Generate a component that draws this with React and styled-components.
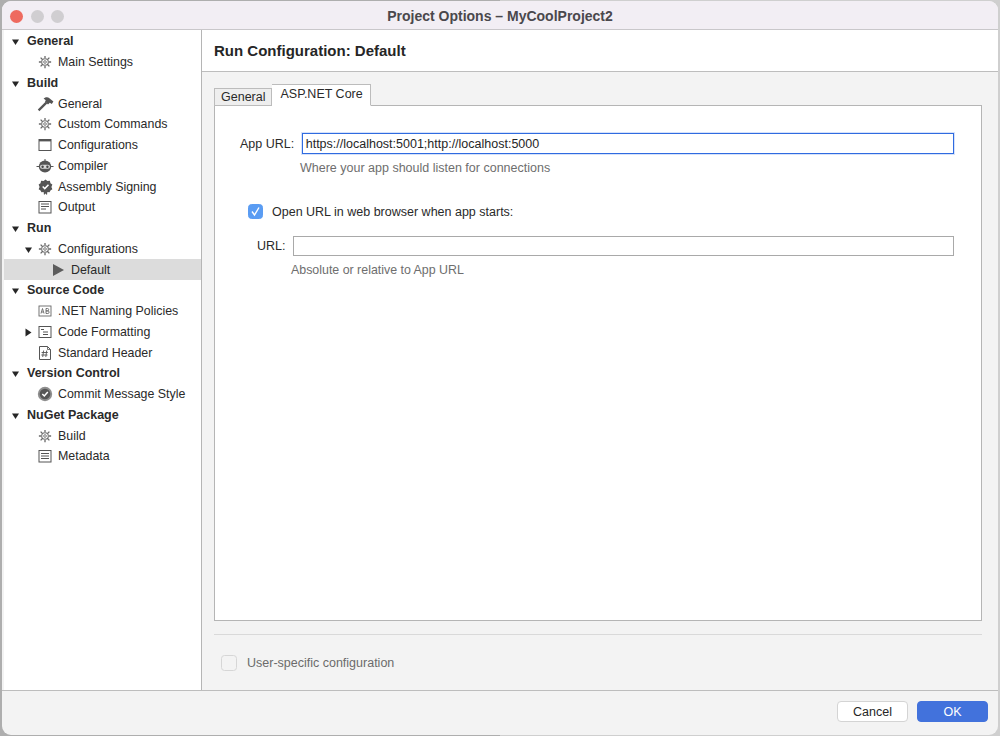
import React from "react";
import styled, { createGlobalStyle } from "styled-components";

const Global = createGlobalStyle`
  html, body { margin: 0; padding: 0; background: #b9b9b9; }
  body { font-family: "Liberation Sans", Arial, sans-serif; color: #262626; -webkit-font-smoothing: antialiased; }
  #root { width: 1000px; height: 736px; overflow: hidden; }
`;

const Desktop = styled.div`
  width: 1000px;
  height: 736px;
  padding: 1px 2px 1px 2px;
  box-sizing: border-box;
  background: linear-gradient(to right, #aeaeae 0 50%, #cfcfcf 50% 100%);
`;
const Win = styled.div`
  height: 100%;
  display: flex;
  flex-direction: column;
  border-radius: 9px;
  overflow: hidden;
  background: #f3f3f3;
`;
const TitleBar = styled.div`
  position: relative;
  height: 29px;
  flex: none;
  box-sizing: border-box;
  padding-top: 2px;
  display: flex;
  align-items: center;
  justify-content: center;
  background: #f2eef4;
  border-bottom: 1px solid #c9c7ca;
`;
const Lights = styled.div`
  position: absolute;
  left: 8px;
  top: 9px;
  display: flex;
  gap: 7.5px;
`;
const Light = styled.span`
  width: 13px;
  height: 13px;
  border-radius: 50%;
  background: ${p => p.$c};
`;
const Title = styled.div`
  font-size: 14px;
  font-weight: 700;
  color: #4a484c;
`;
const Body = styled.div`
  flex: 1;
  display: flex;
  min-height: 0;
  border-bottom: 1px solid #bdbdbd;
`;
const Side = styled.div`
  width: 197px;
  flex: none;
  background: #fff;
  border-right: 1px solid #b5b5b5;
  padding-top: 1px;
  margin-left: 2px;
`;
const Row = styled.div`
  height: 20.75px;
  display: flex;
  align-items: center;
  position: relative;
  padding-left: ${p => p.$indent}px;
  background: ${p => (p.$sel ? "#dcdcdc" : "transparent")};
  font-size: ${p => (p.$head ? 12.5 : 12.4)}px;
  font-weight: ${p => (p.$head ? 700 : 400)};
  color: #2a2a2a;
  white-space: nowrap;
`;
const Tri = styled.svg`
  position: absolute;
  left: ${p => p.$x}px;
  top: 6px;
  width: 9px;
  height: 9px;
`;
const IconSlot = styled.span`
  width: 16px;
  height: 16px;
  flex: none;
  margin-right: 5px;
  display: flex;
  align-items: center;
  justify-content: center;
  & > svg { flex: none; }
`;
const Main = styled.div`
  flex: 1;
  display: flex;
  flex-direction: column;
  min-width: 0;
`;
const Header = styled.div`
  height: 41px;
  flex: none;
  background: #fff;
  border-bottom: 1px solid #bdbdbd;
  display: flex;
  align-items: center;
  padding-left: 12px;
  font-size: 15px;
  font-weight: 700;
  color: #262626;
`;
const Content = styled.div`
  flex: 1;
  display: flex;
  flex-direction: column;
  padding: 13px 16px 0 12px;
  min-height: 0;
`;
const Tabs = styled.div`
  display: flex;
  height: 21px;
  align-items: flex-end;
  position: relative;
  z-index: 1;
  margin-bottom: -1px;
`;
const Tab = styled.div`
  height: ${p => (p.$on ? 22 : 18)}px;
  box-sizing: border-box;
  padding: 0 ${p => (p.$on ? "7px 2px 8px" : "6px")};
  display: flex;
  align-items: center;
  font-size: 12.5px;
  color: #2a2a2a;
  background: ${p => (p.$on ? "#fff" : "#eeeeee")};
  border: 1px solid #bcbcbc;
  border-bottom: ${p => (p.$on ? "1px solid #fff" : "1px solid #bcbcbc")};
  border-left: ${p => (p.$on ? "none" : "1px solid #bcbcbc")};
`;
const Panel = styled.div`
  flex: 1;
  background: #fff;
  border: 1px solid #b5b5b5;
  min-height: 0;
  padding: 27px 27px 0 25px;
  box-sizing: border-box;
`;
const FieldRow = styled.div`
  display: flex;
  align-items: center;
  gap: ${p => p.$gap}px;
  padding-left: ${p => p.$pad}px;
  margin-top: ${p => p.$top || 0}px;
`;
const Label = styled.label`
  font-size: 12.5px;
  color: #2a2a2a;
`;
const Input = styled.div`
  flex: 1;
  height: ${p => p.$h}px;
  box-sizing: border-box;
  background: #fff;
  border: ${p => (p.$focus ? "1.5px solid #2f6be0" : "1px solid #a9a9a9")};
  box-shadow: ${p => (p.$focus ? "0 0 0 1px rgba(90,140,235,.25)" : "none")};
  padding-left: 2.5px;
  font-size: 12.5px;
  display: flex;
  align-items: center;
  color: #262626;
`;
const Hint = styled.div`
  font-size: ${p => p.$size}px;
  color: #6e6e6e;
  margin-top: ${p => p.$top}px;
  padding-left: ${p => p.$pad}px;
`;
const CheckRow = styled.div`
  display: flex;
  align-items: center;
  gap: ${p => p.$gap}px;
  margin-top: ${p => p.$top}px;
  padding-left: ${p => p.$pad}px;
`;
const Check = styled.span`
  width: ${p => (p.$on ? 15 : 16)}px;
  height: ${p => (p.$on ? 15 : 16)}px;
  box-sizing: border-box;
  flex: none;
  border-radius: 3.5px;
  display: flex;
  align-items: center;
  justify-content: center;
  background: ${p => (p.$on ? "#5a9cf3" : "#f3f3f3")};
  border: 1px solid ${p => (p.$on ? "#5a9cf3" : "#d6d6d6")};
`;
const Divider = styled.div`
  height: 1px;
  background: #d9d9d9;
  margin-top: 13px;
  flex: none;
`;
const UserRow = styled.div`
  height: 55px;
  flex: none;
  display: flex;
  align-items: center;
  gap: 10px;
  padding: 0 0 0 7px;
  font-size: 12.5px;
  color: #6b6b6b;
`;
const Footer = styled.div`
  height: 44px;
  flex: none;
  box-sizing: border-box;
  display: flex;
  align-items: center;
  justify-content: flex-end;
  gap: 9px;
  padding: 0 10px 3px 0;
`;
const Btn = styled.button`
  width: 71px;
  height: 21px;
  box-sizing: border-box;
  border-radius: 4px;
  font-family: inherit;
  font-size: 12.5px;
  padding: 0;
  color: ${p => (p.$primary ? "#fff" : "#262626")};
  background: ${p => (p.$primary ? "#4272dc" : "#fff")};
  border: 1px solid ${p => (p.$primary ? "#4272dc" : "#d4d4d4")};
`;

const Gear = () => (
  <svg width="14" height="14" viewBox="0 0 16 16" fill="none" stroke="#6a6a6a">
    <circle cx="8" cy="8" r="3.8" strokeWidth="1.2" />
    <circle cx="8" cy="8" r="1.5" strokeWidth="1" />
    <path strokeWidth="1.5" d="M8 1v2.4M8 12.6V15M1 8h2.4M12.6 8H15M3 3l1.800 1.800M11.200 11.200 13 13M13 3l-1.800 1.800M4.800 11.200 3 13" />
  </svg>
);
const Hammer = () => (
  <svg width="17" height="16" viewBox="0 0 17 16">
    <path d="M0.8 13.600 8.600 5.800l1.600 1.600-7.800 7.800z" fill="#555" />
    <path d="M6.600 2.800C8.800 0.800 11 1.200 12.400 2.200L16.400 5.600 14.800 8 12.800 6.800 11 8.600 8 5.400 8.800 4.200C8.400 3.600 7.600 3.200 6.600 2.800z" fill="#555" />
  </svg>
);
const WindowIc = () => (
  <svg width="14" height="14" viewBox="0 0 14 14" fill="none">
    <rect x="1" y="1.500" width="12" height="11" stroke="#555" />
    <rect x="1" y="1" width="12" height="2.400" fill="#555" />
  </svg>
);
const Robot = () => (
  <svg width="18" height="18" viewBox="0 0 18 18">
    <path d="M9 2v2" stroke="#555" strokeWidth="1" />
    <path d="M0.500 9.500h2.500M15 9.500h2.500" stroke="#555" strokeWidth="1" />
    <ellipse cx="9" cy="9.500" rx="6.200" ry="6" fill="#555" />
    <rect x="4" y="7.800" width="10" height="4" rx="2" fill="#d8d8d8" />
    <circle cx="6.600" cy="9.800" r="1.200" fill="#444" />
    <circle cx="11.400" cy="9.800" r="1.200" fill="#444" />
  </svg>
);
const Badge = () => (
  <svg width="15" height="16" viewBox="0 0 16 17">
    <path d="M8 0.600l2 1.500 2.700-.3.600 2.600 2 1.500-1 2.600 1 2.300-2 1.300-1 2-2.300-.2-.4 3-1.600-1.500-1.600 1.500-.4-3-2.300.2-1-2-2-1.300 1-2.300-1-2.600 2-1.500.6-2.600 2.700.3z" fill="#555" />
    <path d="M5 8l2.200 2.200L11.200 6" fill="none" stroke="#fff" strokeWidth="1.600" />
  </svg>
);
const Lines = ({ n = 4 }) => (
  <svg width="14" height="14" viewBox="0 0 14 14" fill="none" stroke="#555">
    <rect x="1" y="1.500" width="12" height="11.500" />
    <path d={n === 4 ? "M3 4h8M3 6.500h8M3 9h5" : "M3 4.500h8M3 7h8M3 9.500h8"} />
  </svg>
);
const Play = () => (
  <svg width="13" height="14" viewBox="0 0 13 14"><path d="M1 1l11 6-11 6z" fill="#5c5c5c" /></svg>
);
const Naming = () => (
  <svg width="14" height="14" viewBox="0 0 14 14" fill="none" stroke="#666">
    <rect x="1" y="2" width="12" height="10" strokeWidth=".9" />
    <path strokeWidth=".9" d="M3 9.500 4.500 4.500 6 9.500M3.700 8h1.600M8 4.500v5h1.800a1.300 1.300 0 000-2.600H8h1.500a1.200 1.200 0 000-2.400H8" />
  </svg>
);
const Format = () => (
  <svg width="14" height="14" viewBox="0 0 14 14" fill="none" stroke="#555">
    <rect x="1" y="1.500" width="12" height="11" />
    <path d="M3 4.500h3M5 7h5M5 9.500h5" />
  </svg>
);
const HashDoc = () => (
  <svg width="14" height="16" viewBox="0 0 14 16" fill="none" stroke="#555">
    <path d="M9.500 1.500H1.500v13h11V4.500z" />
    <path d="M9.500 1.500v3h3" strokeWidth=".8" />
    <path d="M5.600 5.500l-.9 6.500M8.700 5.500 7.800 12M3.600 7.500h6.200M3.300 10h6.200" strokeWidth=".9" />
  </svg>
);
const Commit = () => (
  <svg width="16" height="16" viewBox="0 0 16 16">
    <circle cx="8" cy="8" r="7.200" fill="#8f8f8f" />
    <circle cx="8" cy="8" r="5.300" fill="#555" />
    <path d="M5.300 8l2 2 3.500-4" fill="none" stroke="#fff" strokeWidth="1.500" />
  </svg>
);
const Down = ({ x }) => (
  <Tri $x={x} viewBox="0 0 9 9"><path d="M1 2.500h7L4.500 8z" fill="#262626" /></Tri>
);
const Right = ({ x }) => (
  <Tri $x={x} viewBox="0 0 9 9"><path d="M1.500.5v8l6-4z" fill="#262626" /></Tri>
);
const MetaLines = () => <Lines n={3} />;
const OutputLines = () => <Lines n={4} />;

const tree = [
  { t: "General", head: 1 },
  { t: "Main Settings", I: Gear },
  { t: "Build", head: 1 },
  { t: "General", I: Hammer },
  { t: "Custom Commands", I: Gear },
  { t: "Configurations", I: WindowIc },
  { t: "Compiler", I: Robot },
  { t: "Assembly Signing", I: Badge },
  { t: "Output", I: OutputLines },
  { t: "Run", head: 1 },
  { t: "Configurations", I: Gear, arrow: "down" },
  { t: "Default", I: Play, deep: 1, sel: 1 },
  { t: "Source Code", head: 1 },
  { t: ".NET Naming Policies", I: Naming },
  { t: "Code Formatting", I: Format, arrow: "right" },
  { t: "Standard Header", I: HashDoc },
  { t: "Version Control", head: 1 },
  { t: "Commit Message Style", I: Commit },
  { t: "NuGet Package", head: 1 },
  { t: "Build", I: Gear },
  { t: "Metadata", I: MetaLines },
];

export default function App() {
  return (
    <Desktop>
      <Global />
      <Win>
        <TitleBar>
          <Lights>
            <Light $c="#ee6a5f" />
            <Light $c="#d0ced1" />
            <Light $c="#d0ced1" />
          </Lights>
          <Title>Project Options – MyCoolProject2</Title>
        </TitleBar>
        <Body>
          <Side>
            {tree.map((r, i) => (
              <Row key={i} $head={r.head} $sel={r.sel} $indent={r.head ? 23 : r.deep ? 46 : 33}>
                {r.head && <Down x={7} />}
                {r.arrow === "down" && <Down x={20} />}
                {r.arrow === "right" && <Right x={20} />}
                {r.I && <IconSlot><r.I /></IconSlot>}
                {r.t}
              </Row>
            ))}
          </Side>
          <Main>
            <Header>Run Configuration: Default</Header>
            <Content>
              <Tabs>
                <Tab>General</Tab>
                <Tab $on>ASP.NET Core</Tab>
              </Tabs>
              <Panel>
                <FieldRow $gap={8} $pad={0}>
                  <Label>App URL:</Label>
                  <Input $focus $h={21}>https://localhost:5001;http://localhost:5000</Input>
                </FieldRow>
                <Hint $top={7} $pad={60} $size={12.5}>Where your app should listen for connections</Hint>
                <CheckRow $top={29} $gap={9} $pad={8}>
                  <Check $on>
                    <svg width="11" height="11" viewBox="0 0 11 11"><path d="M2 5.500 4.500 9 9 1.500" fill="none" stroke="#fff" strokeWidth="1.400" /></svg>
                  </Check>
                  <Label>Open URL in web browser when app starts:</Label>
                </CheckRow>
                <FieldRow $gap={8} $pad={17} $top={17}>
                  <Label>URL:</Label>
                  <Input $h={20} />
                </FieldRow>
                <Hint $top={7} $pad={51} $size={12.4}>Absolute or relative to App URL</Hint>
              </Panel>
              <Divider />
              <UserRow>
                <Check />
                User-specific configuration
              </UserRow>
            </Content>
          </Main>
        </Body>
        <Footer>
          <Btn>Cancel</Btn>
          <Btn $primary>OK</Btn>
        </Footer>
      </Win>
    </Desktop>
  );
}
